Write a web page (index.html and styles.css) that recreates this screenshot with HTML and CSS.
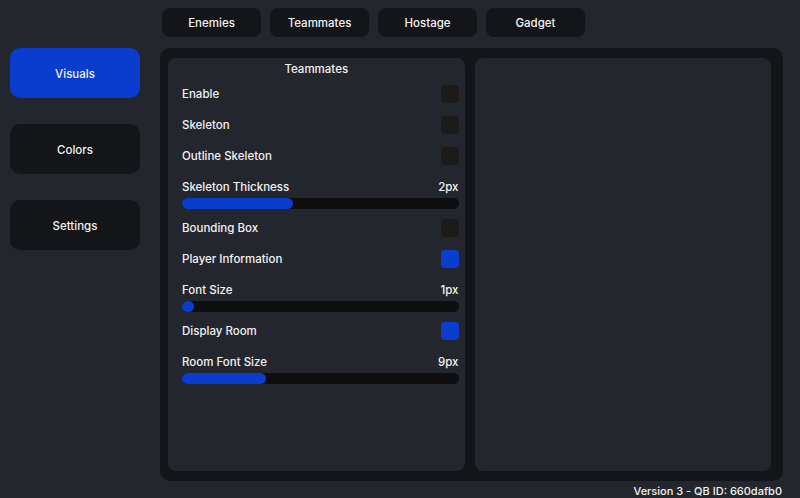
FILE: index.html
```html
<!DOCTYPE html>
<html lang="en">
<head>
  <meta charset="UTF-8">
  <meta name="viewport" content="width=device-width, initial-scale=1.0">
  <title>Menu</title>
  <link rel="stylesheet" href="styles.css">
</head>
<body>
  <div class="app">
    <div class="tabs">
      <div class="tab">Enemies</div>
      <div class="tab">Teammates</div>
      <div class="tab">Hostage</div>
      <div class="tab">Gadget</div>
    </div>

    <div class="sidebar">
      <div class="side-btn active">Visuals</div>
      <div class="side-btn">Colors</div>
      <div class="side-btn">Settings</div>
    </div>

    <div class="main">
      <div class="panel">
        <div class="panel-title">Teammates</div>

        <div class="row"><span>Enable</span><div class="check"></div></div>
        <div class="row"><span>Skeleton</span><div class="check"></div></div>
        <div class="row"><span>Outline Skeleton</span><div class="check"></div></div>

        <div class="slider">
          <div class="slider-label"><span>Skeleton Thickness</span><span>2px</span></div>
          <div class="track"><div class="fill" style="width: 111px;"></div></div>
        </div>

        <div class="row"><span>Bounding Box</span><div class="check"></div></div>
        <div class="row"><span>Player Information</span><div class="check on"></div></div>

        <div class="slider">
          <div class="slider-label"><span>Font Size</span><span>1px</span></div>
          <div class="track"><div class="fill" style="width: 12px;"></div></div>
        </div>

        <div class="row"><span>Display Room</span><div class="check on"></div></div>

        <div class="slider">
          <div class="slider-label"><span>Room Font Size</span><span>9px</span></div>
          <div class="track"><div class="fill" style="width: 84px;"></div></div>
        </div>
      </div>

      <div class="panel"></div>
    </div>

    <div class="footer">Version 3 - QB ID: 660dafb0</div>
  </div>
</body>
</html>
```

FILE: styles.css
```css
* {
  margin: 0;
  padding: 0;
  box-sizing: border-box;
  font-family: Inter, "Noto Sans", sans-serif;
}
body {
  width: 800px;
  height: 498px;
  background-color: #24262d;
  color: #f2f2f2;
  font-size: 11.5px;
  font-weight: 500;
  overflow: hidden;
}
.app {
  display: grid;
  grid-template-columns: 130px 623px;
  grid-template-rows: 29px 433px auto;
  column-gap: 20px;
  row-gap: 11px;
  padding: 8px 0 0 10px;
}
.tabs {
  grid-column: 2;
  display: flex;
  gap: 9px;
  padding-left: 2px;
}
.tab {
  width: 99px;
  height: 29px;
  padding-top: 1px;
  background: #141518;
  border-radius: 8px;
  display: flex;
  align-items: center;
  justify-content: center;
}
.sidebar {
  grid-column: 1;
  display: flex;
  flex-direction: column;
  gap: 26px;
}
.side-btn {
  height: 50px;
  padding-top: 1px;
  background: #141518;
  border-radius: 10px;
  display: flex;
  align-items: center;
  justify-content: center;
}
.side-btn.active {
  background: #0a3ccd;
}
.main {
  grid-column: 2;
  background: #141518;
  border-radius: 10px;
  padding: 10px 12px 10px 8px;
  display: flex;
  gap: 10px;
}
.panel {
  flex: 1;
  background: #24262e;
  border-radius: 8px;
  padding: 3px 6px 0 14px;
}
.panel-title {
  text-align: center;
  line-height: 16px;
  margin-left: -8px;
  margin-bottom: 1px;
}
.row {
  height: 31px;
  display: flex;
  align-items: center;
  justify-content: space-between;
}
.check {
  width: 18px;
  height: 18px;
  border-radius: 4px;
  background: #1c1b1a;
}
.check.on {
  background: #0a3ccd;
}
.slider {
  padding: 8px 0 3px;
}
.slider-label {
  display: flex;
  justify-content: space-between;
  line-height: 16px;
  margin-bottom: 3px;
}
.track {
  height: 11px;
  border-radius: 6px;
  background: #0e0e10;
}
.fill {
  height: 100%;
  border-radius: 6px;
  background: #0a3ccd;
}
.footer {
  grid-column: 2;
  text-align: right;
  font-size: 11px;
  line-height: 17px;
  margin-top: -9px;
  padding-right: 1px;
}
```
